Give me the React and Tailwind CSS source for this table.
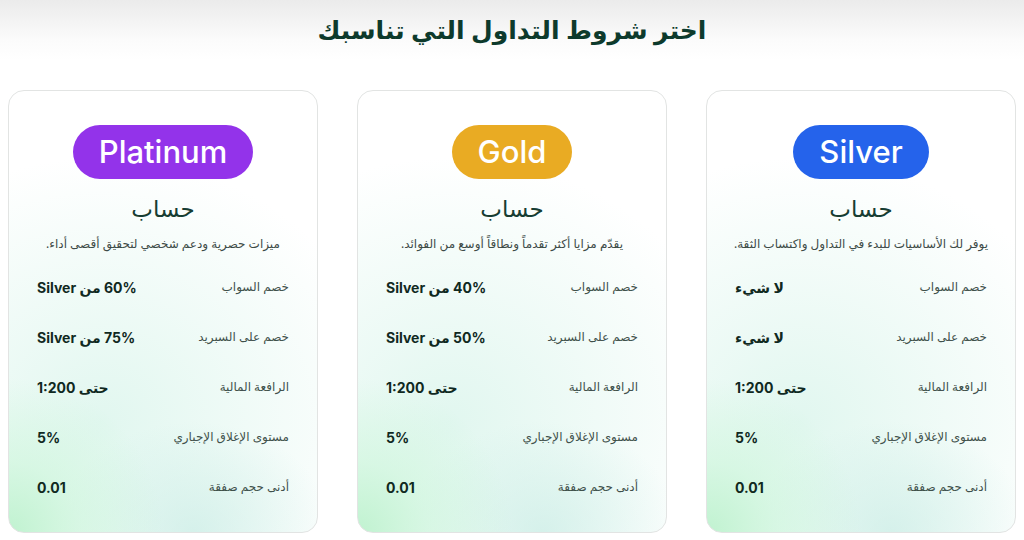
import React from "react";

const plans = [
  {
    name: "Silver",
    pill: "bg-[#2563eb]",
    desc: "يوفر لك الأساسيات للبدء في التداول واكتساب الثقة.",
    rows: ["لا شيء", "لا شيء", "حتى 1:200", "5%", "0.01"],
  },
  {
    name: "Gold",
    pill: "bg-[#e9ab23]",
    desc: "يقدّم مزايا أكثر تقدماً ونطاقاً أوسع من الفوائد.",
    rows: ["40% من Silver", "50% من Silver", "حتى 1:200", "5%", "0.01"],
  },
  {
    name: "Platinum",
    pill: "bg-[#9333ea]",
    desc: "ميزات حصرية ودعم شخصي لتحقيق أقصى أداء.",
    rows: ["60% من Silver", "75% من Silver", "حتى 1:200", "5%", "0.01"],
  },
];

const labels = [
  "خصم السواب",
  "خصم على السبريد",
  "الرافعة المالية",
  "مستوى الإغلاق الإجباري",
  "أدنى حجم صفقة",
];

function Card({ plan }) {
  return (
    <div className="relative h-[443px] rounded-2xl border border-[#e2e4e3] overflow-hidden bg-white bg-[radial-gradient(ellipse_50%_35%_at_0%_100%,#c0f2d0_0%,rgba(205,246,219,0.65)_45%,rgba(255,255,255,0)_100%),radial-gradient(ellipse_45%_25%_at_60%_100%,rgba(195,234,226,0.6)_0%,rgba(255,255,255,0)_100%),radial-gradient(ellipse_95%_60%_at_30%_75%,rgba(215,244,234,0.75)_0%,rgba(255,255,255,0)_100%)]">
      <div className="flex flex-col items-center">
        <div
          className={`mt-[34px] h-[54px] px-[26px] rounded-full flex items-center justify-center text-white text-[31px] font-medium ${plan.pill}`}
          style={{ fontFamily: "Inter, 'Open Sans', sans-serif" }}
          dir="ltr"
        >
          {plan.name}
        </div>
        <div className="mt-[15px] h-[28px] leading-[28px] text-[23px] text-[#173d33]">
          حساب
        </div>
        <div className="mt-3 h-[20px] leading-[20px] text-[12px] text-[#3d4b47]">
          {plan.desc}
        </div>
      </div>
      <div className="mt-2 px-7">
        {labels.map((l, i) => (
          <div key={i} className="h-[50px] flex items-center justify-between">
            <span className="text-[12px] text-[#3f514b]">{l}</span>
            <span
              className="text-[14px] font-bold text-[#10291f]"
              style={{ fontFamily: "Inter, 'DejaVu Sans', sans-serif" }}
            >
              {plan.rows[i]}
            </span>
          </div>
        ))}
      </div>
    </div>
  );
}

export default function App() {
  return (
    <div
      dir="rtl"
      className="w-[1024px] h-[540px] overflow-hidden bg-[linear-gradient(to_bottom,#ebebeb_0px,#fbfbfb_40px,#ffffff_60px)]"
      style={{ fontFamily: "'Noto Sans', 'DejaVu Sans', sans-serif" }}
    >
      <div className="h-[90px] flex items-center justify-center pb-[31px]">
        <h1 className="text-[25px] font-bold text-[#0d3a2c] leading-none">
          اختر شروط التداول التي تناسبك
        </h1>
      </div>
      <div className="grid grid-cols-3 gap-[39px] px-2">
        {plans.map((p) => (
          <Card key={p.name} plan={p} />
        ))}
      </div>
    </div>
  );
}
